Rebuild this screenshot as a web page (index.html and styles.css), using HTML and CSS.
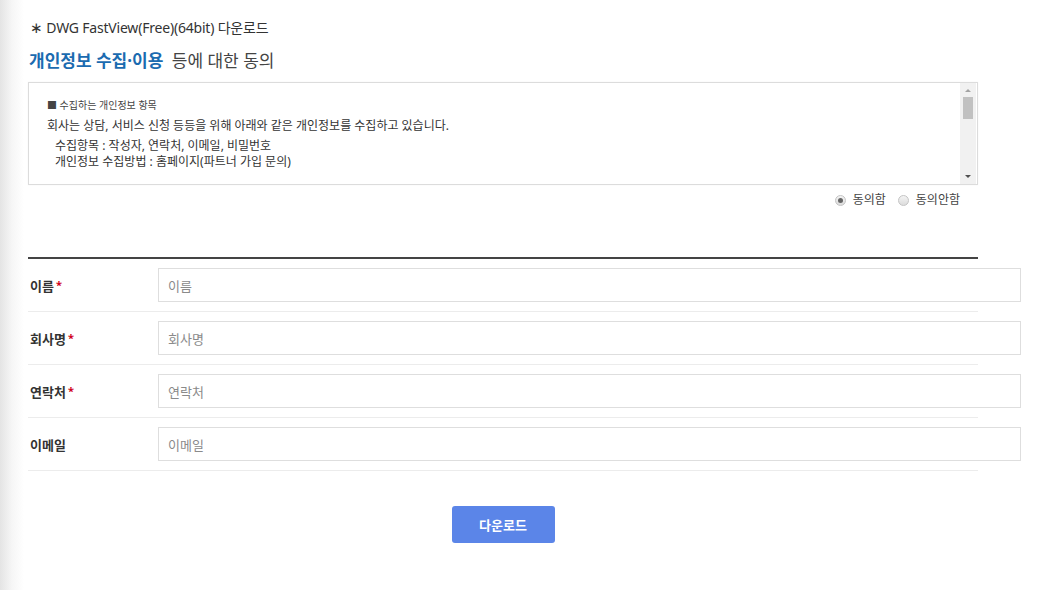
FILE: index.html
```html
<!DOCTYPE html>
<html lang="ko">
<head>
  <meta charset="UTF-8">
  <title>DWG FastView 다운로드</title>
  <link rel="stylesheet" href="styles.css">
</head>
<body>
  <div class="wrap">
    <p class="file-name"><span class="ast">∗</span> DWG FastView(Free)(64bit) 다운로드</p>
    <h2 class="agree-title"><strong>개인정보 수집·이용</strong> 등에 대한 동의</h2>

    <!-- terms box with fake scrollbar -->
    <div class="terms">
      <div class="terms-text">
        <p class="terms-head">■ 수집하는 개인정보 항목</p>
        <p class="terms-lead">회사는 상담, 서비스 신청 등등을 위해 아래와 같은 개인정보를 수집하고 있습니다.</p>
        <p class="terms-item">수집항목 : 작성자, 연락처, 이메일, 비밀번호</p>
        <p class="terms-item">개인정보 수집방법 : 홈페이지(파트너 가입 문의)</p>
      </div>
      <div class="scrollbar">
        <span class="sb-up"></span>
        <span class="sb-thumb"></span>
        <span class="sb-track"></span>
        <span class="sb-down"></span>
      </div>
    </div>

    <div class="agree-radios">
      <label class="radio"><span class="dot checked"></span>동의함</label>
      <label class="radio"><span class="dot"></span>동의안함</label>
    </div>

    <div class="form">
      <div class="row">
        <span class="label">이름<em>*</em></span>
        <input type="text" placeholder="이름">
      </div>
      <div class="row">
        <span class="label">회사명<em>*</em></span>
        <input type="text" placeholder="회사명">
      </div>
      <div class="row">
        <span class="label">연락처<em>*</em></span>
        <input type="text" placeholder="연락처">
      </div>
      <div class="row">
        <span class="label">이메일</span>
        <input type="text" placeholder="이메일">
      </div>
    </div>

    <div class="btn-area">
      <button class="btn-download">다운로드</button>
    </div>
  </div>
</body>
</html>
```

FILE: styles.css
```css
body {
  margin: 0;
  font-family: "Noto Sans", "Noto Sans CJK KR", sans-serif;
  color: #333;
  background: linear-gradient(to right, #e4e4e4 0, #f6f6f6 12px, #fff 24px);
  height: 590px;
}
.wrap {
  width: 950px;
  padding: 16px 0 0 28px;
}
p {
  margin: 0;
}
.file-name {
  font-size: 14px;
  line-height: 22px;
  padding-left: 2px;
  letter-spacing: -0.2px;
  color: #333;
}
.file-name .ast {
  font-size: 15px;
}
.agree-title {
  margin: 10px 0 0;
  padding-left: 1px;
  font-size: 17px;
  font-weight: 400;
  line-height: 24px;
  color: #444;
}
.agree-title strong {
  color: #1b6bb0;
  font-weight: 700;
  margin-right: 4px;
}
.terms {
  display: flex;
  margin-top: 9px;
  height: 101px;
  border: 1px solid #dcdcdc;
  box-shadow: 0 0 2px rgba(0,0,0,0.04);
}
.terms-text {
  flex: 1;
  padding: 14px 0 0 18px;
  font-size: 12px;
  color: #333;
}
.terms-head {
  font-size: 10px;
  line-height: 16px;
  color: #444;
}
.terms-lead {
  margin-top: 4px;
  line-height: 18px;
}
.terms-item {
  padding-left: 8px;
  line-height: 16px;
}
.terms-lead + .terms-item {
  margin-top: 3px;
}
.scrollbar {
  width: 16px;
  margin-right: 1px;
  display: flex;
  flex-direction: column;
  align-items: center;
  background: #f1f1f1;
}
.sb-up,
.sb-down {
  height: 14px;
  width: 16px;
  position: relative;
}
.sb-up::after,
.sb-down::after {
  content: '';
  position: absolute;
  left: 5px;
  border-left: 3px solid transparent;
  border-right: 3px solid transparent;
}
.sb-up::after {
  top: 6px;
  border-bottom: 3px solid #a3a3a3;
}
.sb-down::after {
  top: 5px;
  border-top: 3px solid #505050;
}
.sb-thumb {
  width: 10px;
  height: 22px;
  background: #c1c1c1;
}
.sb-track {
  flex: 1;
}
.agree-radios {
  display: flex;
  justify-content: flex-end;
  gap: 12px;
  margin-top: 7px;
  padding-right: 18px;
  font-size: 12px;
  line-height: 16px;
  color: #444;
}
.radio {
  display: flex;
  align-items: center;
  gap: 7px;
}
.dot {
  width: 9px;
  height: 9px;
  border: 1px solid #c4c4c4;
  border-radius: 50%;
  background: linear-gradient(#f4f4f4, #dcdcdc);
  position: relative;
}
.dot.checked::after {
  content: '';
  position: absolute;
  left: 2px;
  top: 2px;
  width: 5px;
  height: 5px;
  border-radius: 50%;
  background: #666;
}
.form {
  margin-top: 49px;
  border-top: 2px solid #444;
}
.row {
  display: flex;
  align-items: center;
  padding: 9px 0 9px;
  border-bottom: 1px solid #ececec;
}
.label {
  width: 130px;
  box-sizing: border-box;
  flex-shrink: 0;
  padding-left: 2px;
  font-size: 13px;
  font-weight: 700;
  color: #333;
}
.label em {
  font-style: normal;
  font-size: 11px;
  vertical-align: 2px;
  color: #d0021b;
  margin-left: 2px;
}
.row input {
  flex-shrink: 0;
  width: 863px;
  height: 34px;
  box-sizing: border-box;
  border: 1px solid #dedede;
  padding: 0 9px;
  font-family: "Noto Sans CJK KR", sans-serif;
  font-size: 13px;
  color: #333;
  outline: none;
}
.row input::placeholder {
  color: #8a8a8a;
}
.btn-area {
  display: flex;
  justify-content: center;
  margin-top: 35px;
}
.btn-download {
  width: 103px;
  height: 37px;
  border: 0;
  border-radius: 3px;
  background: #5b85e8;
  color: #fff;
  font-family: "Noto Sans CJK KR", sans-serif;
  font-size: 13px;
  font-weight: 700;
}
```
